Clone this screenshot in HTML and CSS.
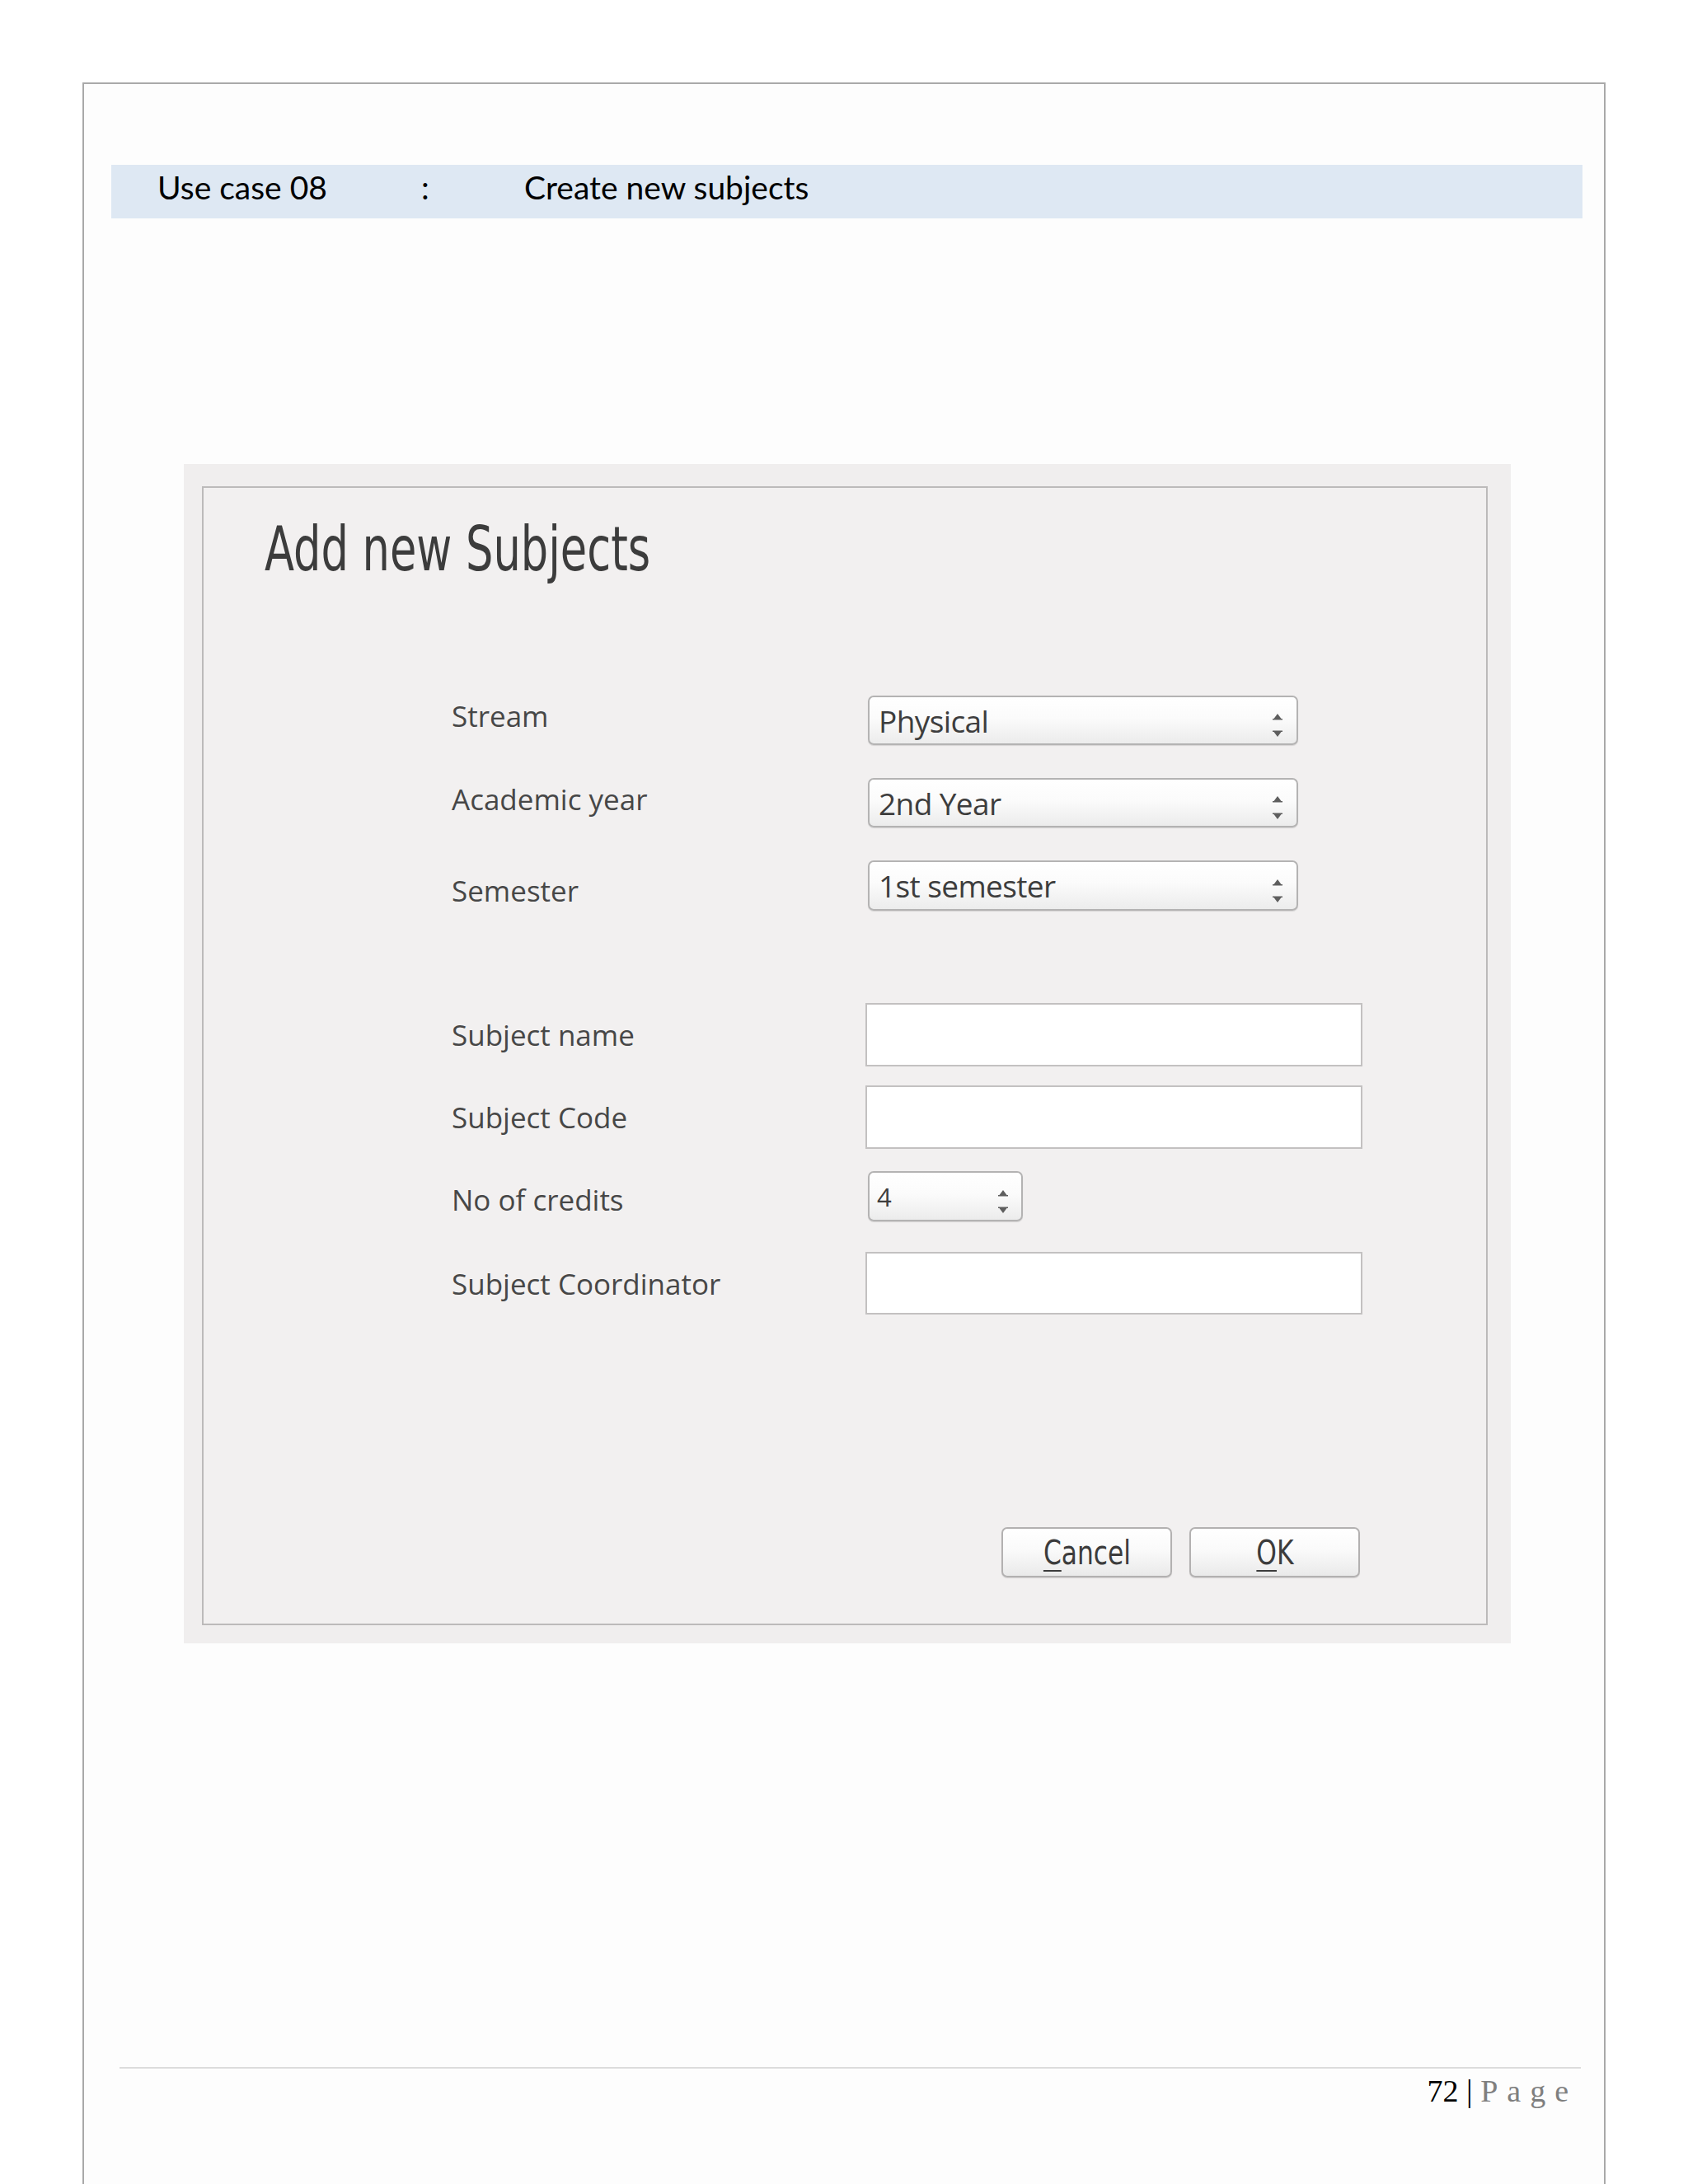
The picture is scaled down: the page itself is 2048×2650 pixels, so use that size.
FILE: index.html
```html
<!DOCTYPE html>
<html lang="en">
<head>
<meta charset="utf-8">
<title>Use case 08 - Create new subjects</title>
<link rel="stylesheet" href="styles.css">
</head>
<body>
<div class="page">
  <div class="band">
    <span class="band-key">Use case 08</span>
    <span class="band-colon">:</span>
    <span class="band-val">Create new subjects</span>
  </div>

  <div class="dialog">
    <div class="dialog-inner">
      <h1 class="title"><span class="title-text">Add new Subjects</span></h1>
      <div class="form">
        <div class="row r-combo">
          <div class="label up6">Stream</div>
          <div class="combo"><span class="combo-text">Physical</span>
            <svg class="arrows" width="14" height="30" viewBox="0 0 14 30"><path d="M7 1 L11.5 7 L2.5 7 Z M1 7 H13 V8.5 H1 Z M1 21.5 H13 V23 H1 Z M2.5 23 L11.5 23 L7 29 Z"/></svg>
          </div>
        </div>
        <div class="row r-combo gap40">
          <div class="label up5">Academic year</div>
          <div class="combo"><span class="combo-text">2nd Year</span>
            <svg class="arrows" width="14" height="30" viewBox="0 0 14 30"><path d="M7 1 L11.5 7 L2.5 7 Z M1 7 H13 V8.5 H1 Z M1 21.5 H13 V23 H1 Z M2.5 23 L11.5 23 L7 29 Z"/></svg>
          </div>
        </div>
        <div class="row r-combo r-combo-last gap40">
          <div class="label dn6">Semester</div>
          <div class="combo"><span class="combo-text">1st semester</span>
            <svg class="arrows" width="14" height="30" viewBox="0 0 14 30"><path d="M7 1 L11.5 7 L2.5 7 Z M1 7 H13 V8.5 H1 Z M1 21.5 H13 V23 H1 Z M2.5 23 L11.5 23 L7 29 Z"/></svg>
          </div>
        </div>

        <div class="row r-input gap112">
          <div class="label">Subject name</div>
          <div class="textbox"></div>
        </div>
        <div class="row r-input gap23">
          <div class="label">Subject Code</div>
          <div class="textbox"></div>
        </div>
        <div class="row r-spin gap27">
          <div class="label dn4">No of credits</div>
          <div class="spin"><span class="spin-text">4</span>
            <svg class="arrows" width="14" height="30" viewBox="0 0 14 30"><path d="M7 1 L11.5 7 L2.5 7 Z M1 7 H13 V8.5 H1 Z M1 21.5 H13 V23 H1 Z M2.5 23 L11.5 23 L7 29 Z"/></svg>
          </div>
        </div>
        <div class="row r-input r-input-last gap37">
          <div class="label">Subject Coordinator</div>
          <div class="textbox"></div>
        </div>

        <div class="buttons">
          <div class="btn"><span class="btn-text"><u>C</u>ancel</span></div>
          <div class="btn"><span class="btn-text"><u>O</u>K</span></div>
        </div>
      </div>
    </div>
  </div>

  <div class="footer-line"></div>
  <div class="footer"><span class="pnum">72</span> | <span class="pword">Page</span></div>
</div>
</body>
</html>
```

FILE: styles.css
```css
html, body {
  margin: 0;
  padding: 0;
  background: #ffffff;
}

body {
  width: 2048px;
  min-height: 2650px;
  overflow: hidden;
}

.page {
  margin: 100px 0 0 100px;
  width: 1844px;
  min-height: 2452px;
  padding-top: 98px;
  border: 2px solid #a9a9a9;
  border-bottom: none;
  background: #fdfdfd;
  box-sizing: content-box;
}

/* header band */
.band {
  margin-left: 33px;
  width: 1785px;
  height: 65px;
  background: #dee8f3;
  display: flex;
  align-items: center;
  padding-left: 56px;
  padding-bottom: 12px;
  box-sizing: border-box;
  font-family: Lato, "Open Sans", sans-serif;
  font-size: 39px;
  color: #000;
}
.band-key { width: 320px; }
.band-colon { width: 125px; }

/* dialog */
.dialog {
  margin-top: 298px;
  margin-left: 121px;
  width: 1610px;
  padding: 27px 28px 22px 22px;
  box-sizing: border-box;
  background: #f0eeee;
}
.dialog-inner {
  border: 2px solid #bcbaba;
  background: #f2f0f0;
  padding: 31px 0 56px 74px;
}

.title {
  margin: 0;
  font-family: "DejaVu Sans Condensed", "DejaVu Sans", sans-serif;
  font-weight: normal;
  font-size: 75px;
  line-height: 86px;
  height: 86px;
  color: #3c3c3c;
}
.title-text {
  display: inline-block;
  transform: scaleX(0.78);
  transform-origin: left center;
  white-space: nowrap;
}

.form {
  margin-top: 135px;
  margin-left: 227px;
  width: 1105px;
}

.row {
  display: flex;
  align-items: center;
}
.r-combo { height: 60px; }
.r-combo-last { height: 61px; }
.r-input { height: 77px; }
.r-input-last { height: 76px; }
.r-spin { height: 61px; }
.gap40 { margin-top: 40px; }
.gap112 { margin-top: 112px; }
.gap23 { margin-top: 23px; }
.gap27 { margin-top: 27px; }
.gap37 { margin-top: 37px; }

.label {
  width: 502px;
  flex: none;
  font-family: "Open Sans", "DejaVu Sans", sans-serif;
  font-size: 35px;
  color: #474747;
  white-space: nowrap;
}
.up6 { margin-bottom: 12px; }
.up5 { margin-bottom: 10px; }
.dn6 { margin-top: 12px; }
.dn4 { margin-top: 8px; }

.combo, .spin {
  height: 100%;
  box-sizing: border-box;
  border: 2px solid #b4b3b3;
  border-radius: 7px;
  background: linear-gradient(#ffffff 0%, #fbfbfb 45%, #ececec 100%);
  box-shadow: 0 1px 1px rgba(0, 0, 0, 0.12);
  display: flex;
  align-items: center;
  justify-content: space-between;
  color: #3d3d3d;
  font-family: "Open Sans", "DejaVu Sans", sans-serif;
}
.combo {
  width: 522px;
  margin-left: 3px;
  padding: 0 16px 0 11px;
}
.combo-text {
  font-size: 37px;
  letter-spacing: -0.6px;
}
.spin {
  width: 188px;
  margin-left: 3px;
  padding: 0 15px 0 9px;
}
.spin-text {
  font-size: 31px;
}
.arrows {
  fill: #5e5e5e;
  margin-top: 12px;
  flex: none;
}

.textbox {
  width: 603px;
  height: 100%;
  box-sizing: border-box;
  border: 2px solid #c3c1c1;
  background: #ffffff;
}

.buttons {
  margin-top: 258px;
  display: flex;
  justify-content: flex-end;
  gap: 21px;
  padding-right: 3px;
}
.btn {
  width: 207px;
  height: 61px;
  box-sizing: border-box;
  border: 2px solid #b3b1b1;
  border-radius: 7px;
  background: linear-gradient(#ffffff 0%, #fafafa 45%, #eaeaea 100%);
  box-shadow: 0 1px 1px rgba(0, 0, 0, 0.12);
  display: flex;
  align-items: center;
  justify-content: center;
  font-family: "DejaVu Sans Condensed", "DejaVu Sans", sans-serif;
  font-size: 40px;
  color: #3c3c3c;
}
.btn-text {
  display: inline-block;
  transform: scaleX(0.87);
  white-space: nowrap;
}
.btn u {
  text-decoration-thickness: 2px;
  text-underline-offset: 7px;
}

/* footer */
.footer-line {
  margin-top: 514px;
  margin-left: 43px;
  width: 1773px;
  height: 2px;
  background: #dcdcdc;
}
.footer {
  margin-left: 43px;
  width: 1773px;
  margin-top: 5px;
  text-align: right;
  font-family: "Liberation Serif", "Times New Roman", serif;
  font-size: 38px;
  color: #000;
  box-sizing: border-box;
  padding-right: 4px;
}
.pword {
  color: #7f7f7f;
  letter-spacing: 11px;
}
```
